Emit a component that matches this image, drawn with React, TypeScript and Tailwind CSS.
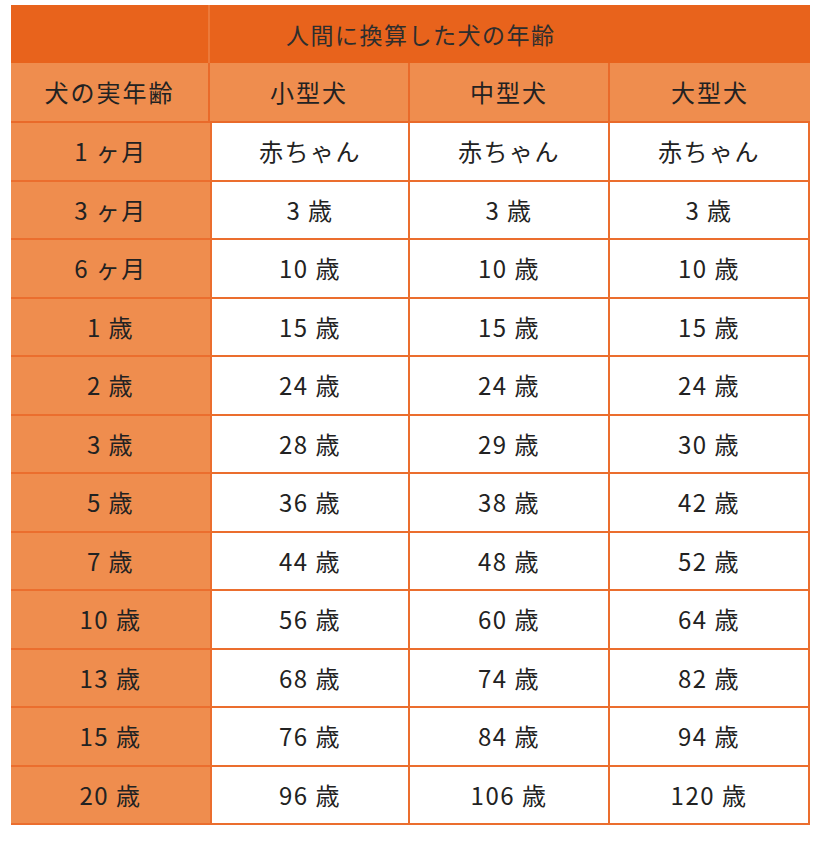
const rows: [string, string, string, string][] = [
  ["1 ヶ月", "赤ちゃん", "赤ちゃん", "赤ちゃん"],
  ["3 ヶ月", "3 歳", "3 歳", "3 歳"],
  ["6 ヶ月", "10 歳", "10 歳", "10 歳"],
  ["1 歳", "15 歳", "15 歳", "15 歳"],
  ["2 歳", "24 歳", "24 歳", "24 歳"],
  ["3 歳", "28 歳", "29 歳", "30 歳"],
  ["5 歳", "36 歳", "38 歳", "42 歳"],
  ["7 歳", "44 歳", "48 歳", "52 歳"],
  ["10 歳", "56 歳", "60 歳", "64 歳"],
  ["13 歳", "68 歳", "74 歳", "82 歳"],
  ["15 歳", "76 歳", "84 歳", "94 歳"],
  ["20 歳", "96 歳", "106 歳", "120 歳"],
];

const font = { fontFamily: '"Noto Sans CJK JP", "Noto Sans", sans-serif' };

export default function App() {
  return (
    <div className="min-h-[850px] w-[827px] bg-white pt-[5px] pl-[11px]" style={font}>
      <div className="flex w-[799px] flex-col text-[24px] text-[#222]">
        {/* title row */}
        <div className="flex h-[58px] bg-[#E8631C]">
          <div className="w-[199px] border-r-2 border-[#EC7A3A]" />
          <div className="flex flex-1 items-center pl-[76px] text-[23px] tracking-[1.5px] text-[#2e2e2e]">
            人間に換算した犬の年齢
          </div>
        </div>
        {/* header row */}
        <div className="flex h-[60px] border-b-2 border-[#E96A2A] bg-[#EF8D4E]">
          <div className="flex w-[199px] items-center justify-center border-r-2 border-[#E96A2A] tracking-[2px]">
            犬の実年齢
          </div>
          <div className="flex w-[200px] items-center justify-center border-r-2 border-[#E96A2A] tracking-[2px]">
            小型犬
          </div>
          <div className="flex w-[200px] items-center justify-center border-r-2 border-[#E96A2A] tracking-[2px]">
            中型犬
          </div>
          <div className="flex w-[200px] items-center justify-center tracking-[2px]">
            大型犬
          </div>
        </div>
        {rows.map((r) => (
          <div key={r[0]} className="flex h-[58.5px] border-b-2 border-[#EB6E2E]">
            <div className="flex w-[199px] items-center justify-center bg-[#EF8D4E] tracking-[1.5px]">
              {r[0]}
            </div>
            <div className="flex w-[200px] items-center justify-center border-x-2 border-[#EB6E2E] tracking-[1.5px]">
              {r[1]}
            </div>
            <div className="flex w-[200px] items-center justify-center border-r-2 border-[#EB6E2E] tracking-[1.5px]">
              {r[2]}
            </div>
            <div className="flex w-[200px] items-center justify-center border-r-2 border-[#EB6E2E] tracking-[1.5px]">
              {r[3]}
            </div>
          </div>
        ))}
      </div>
    </div>
  );
}
